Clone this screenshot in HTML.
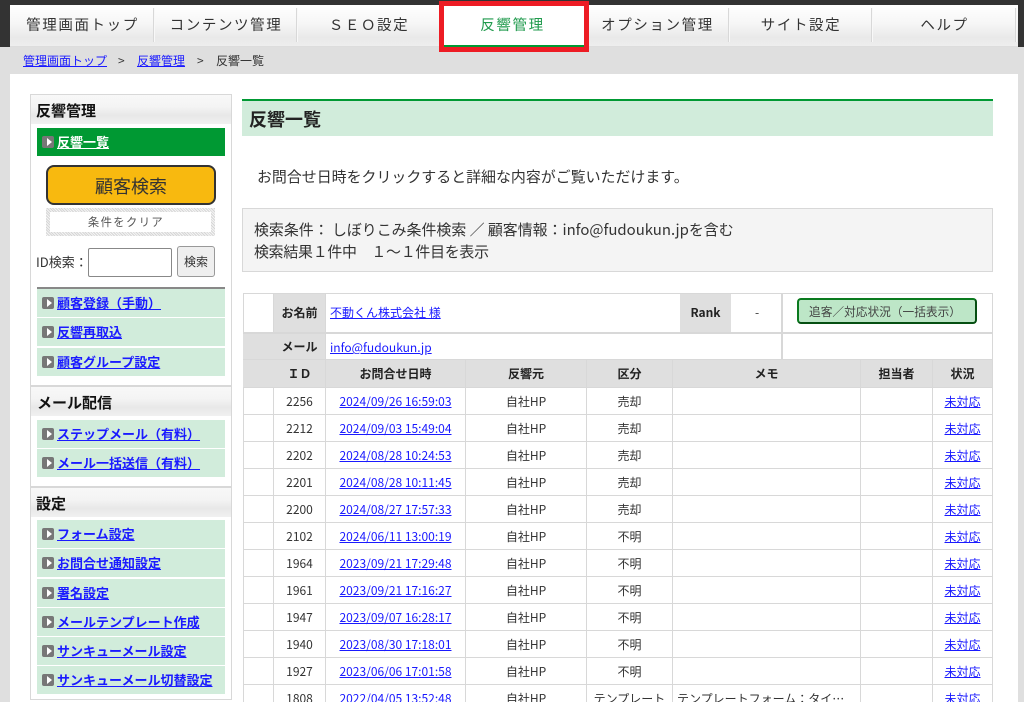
<!DOCTYPE html>
<html lang="ja"><head><meta charset="utf-8"><title>反響一覧</title>
<style>
*{box-sizing:border-box}
html,body{margin:0;padding:0;width:1024px;height:702px;overflow:hidden;background:#dfdfdf}
body{font-family:"Noto Sans CJK JP","Liberation Sans",sans-serif;color:#333;position:relative;font-size:12px}
a{color:#1a1aff;text-decoration:underline}
.a{position:absolute;white-space:nowrap}
.nav{position:absolute;top:5px;height:41px;line-height:39px;text-align:center;font-size:14.5px;letter-spacing:1.6px;color:#333;white-space:nowrap}
.sep{position:absolute;top:8px;width:2px;height:34px;background:#d8d8d8;border-right:1px solid #f8f8f8}
.sh{position:absolute;left:31px;width:200px;height:29px;background:linear-gradient(#f8f8f8 0,#f4f4f4 40%,#e8e8e8 70%,#f0f0f0 100%);font-weight:bold;font-size:15px;line-height:32px;color:#111;padding-left:5px}
.m{position:absolute;left:37px;width:188px;height:28px;background:#d1ecdb;font-size:13px;font-weight:bold;line-height:27px;padding-left:20px;white-space:nowrap}
.m:before,.cur:before{content:"";position:absolute;left:5px;top:8px;width:12px;height:12px;border-radius:2px;background:#777}
.m:after,.cur:after{content:"";position:absolute;left:10px;top:10px;border-left:5px solid #fff;border-top:4px solid transparent;border-bottom:4px solid transparent}
.cur{position:absolute;left:37px;top:128px;width:188px;height:28px;background:#009933;font-size:13px;font-weight:bold;line-height:27px;padding-left:20px}
.cur a{color:#fff}
table{position:absolute;left:243px;top:359px;width:750px;border-collapse:collapse;table-layout:fixed;background:#fff}
td,th{border:1px solid #d8d8d8;text-align:center;font-size:12px;color:#333;white-space:nowrap;overflow:hidden;font-weight:normal}
td{height:26px;padding:2px 0 0;line-height:24px}
th{padding:0;line-height:26px;background:#dfdfdf;font-weight:bold;height:28px;color:#222}
td.l{text-align:left;padding-left:4px}
.ln{position:absolute;background:#d8d8d8}
.g{position:absolute;background:#dfdfdf;font-weight:bold;font-size:12px;color:#222;text-align:center}
</style></head><body>
<div class="a" style="left:0;top:0;width:1024px;height:47px;background:#333"></div>
<div class="a" style="left:10px;top:5px;width:1008px;height:42px;background:linear-gradient(#fff 0,#f6f6f6 45%,#e9e9e9 80%,#eee 100%);border-bottom:1px solid #ddd"></div>
<div class="a" style="left:10px;top:47px;width:1008px;height:27px;background:#dfdfdf"></div>
<div class="a" style="left:10px;top:74px;width:1008px;height:628px;background:#fff"></div>

<div class="nav" style="left:11px;width:143px">管理画面トップ</div><div class="sep" style="left:153px"></div>
<div class="nav" style="left:155px;width:142px">コンテンツ管理</div><div class="sep" style="left:296px"></div>
<div class="nav" style="left:298px;width:142px;letter-spacing:1.6px">ＳＥＯ設定</div>
<div class="a" style="left:444px;top:5px;width:140px;height:42px;background:#fff;border-bottom:2px solid #009933"></div>
<div class="nav" style="left:441px;width:143px;color:#1f9a4c">反響管理</div>
<div class="nav" style="left:586px;width:143px">オプション管理</div><div class="sep" style="left:728px"></div>
<div class="nav" style="left:730px;width:142px">サイト設定</div><div class="sep" style="left:871px"></div>
<div class="nav" style="left:873px;width:143px">ヘルプ</div><div class="sep" style="left:1015px"></div>
<div class="a" style="left:439px;top:1px;width:150px;height:51px;border:5px solid #ed1c24"></div>

<div class="a" style="left:23px;top:52px;font-size:12px;line-height:17px"><a href="#">管理画面トップ</a></div>
<div class="a" style="left:118px;top:52px;font-size:12px;line-height:17px">&gt;</div>
<div class="a" style="left:137px;top:52px;font-size:12px;line-height:17px"><a href="#">反響管理</a></div>
<div class="a" style="left:197px;top:52px;font-size:12px;line-height:17px">&gt;</div>
<div class="a" style="left:216px;top:52px;font-size:12px;line-height:17px">反響一覧</div>

<!-- sidebar -->
<div class="a" style="left:30px;top:94px;width:202px;height:606px;border:1px solid #d8d8d8;background:#fff"></div>
<div class="sh" style="top:95px">反響管理</div>
<div class="cur"><a href="#">反響一覧</a></div>
<div class="a" style="left:46px;top:165px;width:170px;height:40px;background:#f8b90f;border:2px solid #333;border-radius:8px;text-align:center;font-size:18px;line-height:38px;color:#333">顧客検索</div>
<div class="a" style="left:46px;top:208px;width:169px;height:28px;background:repeating-linear-gradient(45deg,#d6d6d6 0,#d6d6d6 1px,#f4f4f4 1px,#f4f4f4 2px);padding:4px"><div style="background:#fff;height:20px;text-align:center;font-size:11.3px;letter-spacing:1.4px;line-height:21px;color:#555;padding-right:9px">条件をクリア</div></div>
<div class="a" style="left:36px;top:252px;font-size:13px;line-height:20px">ID検索：</div>
<div class="a" style="left:88px;top:248px;width:84px;height:29px;background:#fff;border:1px solid #888;border-radius:2px"></div>
<div class="a" style="left:177px;top:246px;width:38px;height:31px;background:#efefef;border:1px solid #999;border-radius:3px;text-align:center;font-size:12px;line-height:30px">検索</div>
<div class="a" style="left:37px;top:287px;width:188px;height:2px;background:#888"></div>
<div class="m" style="top:289px"><a href="#">顧客登録（手動）</a></div>
<div class="m" style="top:318px"><a href="#">反響再取込</a></div>
<div class="m" style="top:348px"><a href="#">顧客グループ設定</a></div>
<div class="a" style="left:31px;top:385px;width:200px;height:2px;background:#d8d8d8"></div>
<div class="sh" style="top:387px;padding-left:6px">メール配信</div>
<div class="m" style="top:420px"><a href="#">ステップメール（有料）</a></div>
<div class="m" style="top:449px"><a href="#">メール一括送信（有料）</a></div>
<div class="a" style="left:31px;top:486px;width:200px;height:2px;background:#d8d8d8"></div>
<div class="sh" style="top:488px">設定</div>
<div class="m" style="top:520px"><a href="#">フォーム設定</a></div>
<div class="m" style="top:549px"><a href="#">お問合せ通知設定</a></div>
<div class="m" style="top:579px"><a href="#">署名設定</a></div>
<div class="m" style="top:608px"><a href="#">メールテンプレート作成</a></div>
<div class="m" style="top:637px"><a href="#">サンキューメール設定</a></div>
<div class="m" style="top:666px"><a href="#">サンキューメール切替設定</a></div>

<!-- main -->
<div class="a" style="left:242px;top:99px;width:751px;height:37px;background:#d1ecdb;border-top:2px solid #009933;font-size:18px;font-weight:bold;line-height:36px;padding-left:7px;color:#222">反響一覧</div>
<div class="a" style="left:257px;top:166px;font-size:14.95px;line-height:22px">お問合せ日時をクリックすると詳細な内容がご覧いただけます。</div>
<div class="a" style="left:242px;top:208px;width:751px;height:64px;background:#f4f4f4;border:1px solid #d8d8d8"></div>
<div class="a" style="left:254px;top:219px;font-size:14.93px;line-height:22px">検索条件： しぼりこみ条件検索 ／ 顧客情報：info@fudoukun.jpを含む<br><span style="letter-spacing:-.25px">検索結果１件中　１～１件目を表示</span></div>

<table>
<colgroup><col style="width:30px"><col style="width:52px"><col style="width:140px"><col style="width:121px"><col style="width:86px"><col style="width:188px"><col style="width:72px"><col style="width:60px"></colgroup>
<tr><th></th><th>ＩＤ</th><th>お問合せ日時</th><th>反響元</th><th>区分</th><th>メモ</th><th>担当者</th><th>状況</th></tr>
<tr><td></td><td>2256</td><td><a href="#">2024/09/26 16:59:03</a></td><td>自社HP</td><td>売却</td><td></td><td></td><td><a href="#">未対応</a></td></tr>
<tr><td></td><td>2212</td><td><a href="#">2024/09/03 15:49:04</a></td><td>自社HP</td><td>売却</td><td></td><td></td><td><a href="#">未対応</a></td></tr>
<tr><td></td><td>2202</td><td><a href="#">2024/08/28 10:24:53</a></td><td>自社HP</td><td>売却</td><td></td><td></td><td><a href="#">未対応</a></td></tr>
<tr><td></td><td>2201</td><td><a href="#">2024/08/28 10:11:45</a></td><td>自社HP</td><td>売却</td><td></td><td></td><td><a href="#">未対応</a></td></tr>
<tr><td></td><td>2200</td><td><a href="#">2024/08/27 17:57:33</a></td><td>自社HP</td><td>売却</td><td></td><td></td><td><a href="#">未対応</a></td></tr>
<tr><td></td><td>2102</td><td><a href="#">2024/06/11 13:00:19</a></td><td>自社HP</td><td>不明</td><td></td><td></td><td><a href="#">未対応</a></td></tr>
<tr><td></td><td>1964</td><td><a href="#">2023/09/21 17:29:48</a></td><td>自社HP</td><td>不明</td><td></td><td></td><td><a href="#">未対応</a></td></tr>
<tr><td></td><td>1961</td><td><a href="#">2023/09/21 17:16:27</a></td><td>自社HP</td><td>不明</td><td></td><td></td><td><a href="#">未対応</a></td></tr>
<tr><td></td><td>1947</td><td><a href="#">2023/09/07 16:28:17</a></td><td>自社HP</td><td>不明</td><td></td><td></td><td><a href="#">未対応</a></td></tr>
<tr><td></td><td>1940</td><td><a href="#">2023/08/30 17:18:01</a></td><td>自社HP</td><td>不明</td><td></td><td></td><td><a href="#">未対応</a></td></tr>
<tr><td></td><td>1927</td><td><a href="#">2023/06/06 17:01:58</a></td><td>自社HP</td><td>不明</td><td></td><td></td><td><a href="#">未対応</a></td></tr>
<tr><td></td><td>1808</td><td><a href="#">2022/04/05 13:52:48</a></td><td>自社HP</td><td>テンプレート</td><td class="l">テンプレートフォーム：タイ…</td><td></td><td><a href="#">未対応</a></td></tr>
</table>

<!-- customer header -->
<div class="a" style="left:243px;top:293px;width:750px;height:67px;background:#fff;border:1px solid #d8d8d8;border-bottom:0"></div>
<div class="a" style="left:243px;top:333px;width:31px;height:54px;background:#dfdfdf"></div>
<div class="g" style="left:274px;top:294px;width:51px;height:38px;line-height:37px">お名前</div>
<div class="g" style="left:274px;top:334px;width:51px;height:25px;line-height:26px">メール</div>
<div class="ln" style="left:243px;top:332px;width:750px;height:2px"></div>
<div class="ln" style="left:273px;top:293px;width:1px;height:40px"></div>
<div class="ln" style="left:325px;top:293px;width:1px;height:66px"></div>
<div class="a" style="left:330px;top:304px;font-size:12px;line-height:18px"><a href="#">不動くん株式会社 様</a></div>
<div class="a" style="left:330px;top:339px;font-size:12px;line-height:18px"><a href="#">info@fudoukun.jp</a></div>
<div class="g" style="left:680px;top:294px;width:51px;height:38px;line-height:37px">Rank</div>
<div class="a" style="left:755px;top:304px;line-height:18px;font-size:12px">-</div>
<div class="ln" style="left:781px;top:293px;width:2px;height:66px"></div>
<div class="a" style="left:797px;top:298px;width:180px;height:26px;background:#bde6c7;border:2px solid #0a7a1e;border-bottom-color:#064f12;border-right-color:#064f12;border-radius:4px;font-size:11.7px;line-height:23px;padding-left:10px;color:#444">追客／対応状況（一括表示）</div>
<div class="ln" style="left:243px;top:359px;width:750px;height:1px"></div>
</body></html>
